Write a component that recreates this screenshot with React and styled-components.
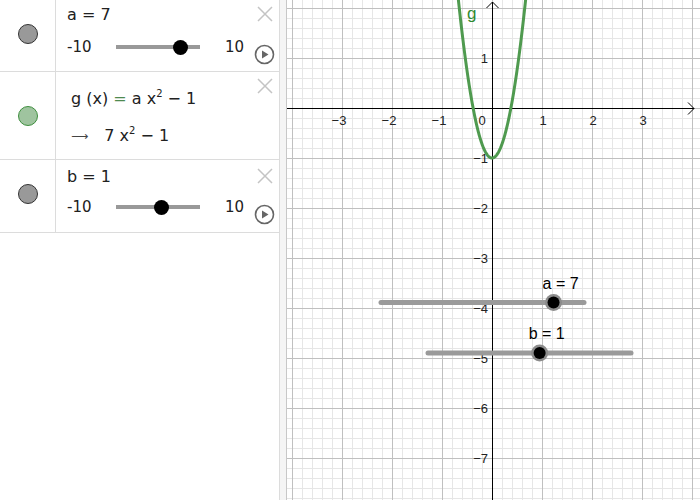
import * as React from 'react';
import styled, { createGlobalStyle } from 'styled-components';

const Global = createGlobalStyle`
  html, body { margin:0; padding:0; background:#fff; }
  body { font-family:'DejaVu Sans', sans-serif; color:#212121; }
`

const Page = styled.div`
  display:flex;
  width:700px;
  height:500px;
  overflow:hidden;
`

const AlgebraPanel = styled.div`
  display:flex;
  flex-direction:column;
  width:279px;
  height:100%;
  border-right:1px solid #dcdcdc;
  flex-shrink:0;
`

const Splitter = styled.div`
  width:6px;
  height:100%;
  background:#f5f5f5;
  border-right:1px solid #c8c8c8;
  flex-shrink:0;
`

const Graphics = styled.div`
  flex:1;
  height:100%;
  position:relative;
`

const Row = styled.div`
  display:flex;
  height:${p => p.h}px;
  border-bottom:1px solid #dcdcdc;
  box-sizing:border-box;
`

const MarbleCell = styled.div`
  display:flex;
  align-items:center;
  justify-content:center;
  width:56px;
  border-right:1px solid #dcdcdc;
  flex-shrink:0;
  padding-bottom:${p => p.shift || 0}px;
  box-sizing:border-box;
`

const Marble = styled.div`
  width:18px;
  height:18px;
  border-radius:50%;
  background:${p => p.fill};
  border:1px solid ${p => p.stroke};
`

const Content = styled.div`
  flex:1;
  position:relative;
  padding:${p => p.top || 8}px 0 0 ${p => p.left || 11}px;
`

const Label = styled.div`
  font-size:16px;
  line-height:16px;
  height:16px;
`

const SliderLine = styled.div`
  display:flex;
  align-items:center;
  margin-top:${p => p.gap || 14}px;
  font-size:15px;
  height:16px;
`

const Bound = styled.span`
  width:${p => p.w}px;
  flex-shrink:0;
`

const Track = styled.div`
  position:relative;
  width:84px;
  height:4px;
  background:#999;
  margin:0 25px 0 0;
`

const Knob = styled.div`
  position:absolute;
  top:50%;
  width:15px;
  height:15px;
  margin:-7.5px 0 0 -7.5px;
  border-radius:50%;
  background:#000;
`

const Close = styled.svg`
  position:absolute;
  top:${p => p.t}px;
  right:6px;
`

const Play = styled.svg`
  position:absolute;
  right:4px;
  top:${p => p.t}px;
`

const Formula = styled.div`
  font-size:16px;
  line-height:20px;
  sup { font-size:10px; vertical-align:7px; line-height:0; }
`

const Eq = styled.span`
  color:#4f8a4f;
`

const Output = styled.div`
  display:flex;
  align-items:center;
  gap:16px;
  margin-top:17px;
  font-size:16px;
  line-height:20px;
  sup { font-size:10px; vertical-align:7px; line-height:0; }
`

const Arrow = styled.span`
  color:#444;
  font-size:12px;
`

const GraphSvg = styled.svg`
  display:block;
  font-family:'Liberation Sans', Arial, sans-serif;
`

const CloseIcon = ({ t }) => (
  <Close t={t} width="16" height="16" viewBox="0 0 16 16">
    <path d="M1 1 L15 15 M15 1 L1 15" stroke="#c4c4c4" strokeWidth="1.5" fill="none" />
  </Close>
)

const PlayIcon = ({ t }) => (
  <Play t={t} width="21" height="21" viewBox="0 0 21 21">
    <circle cx="10.5" cy="10.5" r="9" stroke="#666" strokeWidth="1.6" fill="none" />
    <path d="M8 6.5 L14.5 10.5 L8 14.5 Z" fill="#666" />
  </Play>
)

// knob travels over the inner part of the track, as in the original
const knobPos = v => 0.107 + ((v + 10) / 20) * 0.78

const SliderRow = ({ name, value, h, closeTop, playTop, top, gap }) => (
  <Row h={h}>
    <MarbleCell shift={4}>
      <Marble fill="#999" stroke="#333" />
    </MarbleCell>
    <Content top={top}>
      <Label>{name} = {value}</Label>
      <SliderLine gap={gap}>
        <Bound w={49}>-10</Bound>
        <Track>
          <Knob style={{ left: `${knobPos(value) * 100}%` }} />
        </Track>
        <span>10</span>
      </SliderLine>
      <CloseIcon t={closeTop} />
      <PlayIcon t={playTop} />
    </Content>
  </Row>
)

const W = 413
const H = 500
const OX = 205
const OY = 108
const U = 50

const px = x => OX + x * U
const py = y => OY - y * U

const curve = () => {
  const pts = []
  for (let i = 0; i <= 160; i++) {
    const x = -0.69 + (1.38 * i) / 160
    pts.push(`${px(x).toFixed(2)},${py(7 * x * x - 1).toFixed(2)}`)
  }
  return 'M' + pts.join(' L')
}

const Grid = () => {
  const minor = []
  const major = []
  for (let x = OX % 10; x <= W; x += 10) {
    const isMajor = Math.round(x - OX) % 50 === 0
    const l = <line key={'v' + x} x1={x + 0.5} y1={0} x2={x + 0.5} y2={H} stroke={isMajor ? '#c0c0c0' : '#e6e6e6'} strokeWidth="1" />
    ;(isMajor ? major : minor).push(l)
  }
  for (let y = OY % 10; y <= H; y += 10) {
    const isMajor = Math.round(y - OY) % 50 === 0
    const l = <line key={'h' + y} x1={0} y1={y + 0.5} x2={W} y2={y + 0.5} stroke={isMajor ? '#c0c0c0' : '#e6e6e6'} strokeWidth="1" />
    ;(isMajor ? major : minor).push(l)
  }
  return <g>{minor}{major}</g>
}

const GraphSlider = ({ x1, x2, y, value, name }) => {
  const kx = x1 + ((value + 10) / 20) * (x2 - x1)
  return (
    <g>
      <line x1={x1} y1={y} x2={x2} y2={y} stroke="#9a9a9a" strokeWidth="5" strokeLinecap="round" />
      <circle cx={kx} cy={y} r="8.5" fill="#8c8c8c" />
      <circle cx={kx} cy={y} r="6" fill="#000" />
      <text x={kx - 11} y={y - 14} fontSize="16" fill="#000">{name} = {value}</text>
    </g>
  )
}

const Plane = () => (
  <GraphSvg width={W} height={H} viewBox={`0 0 ${W} ${H}`}>
    <Grid />
    <line x1={0} y1={OY + 0.5} x2={W - 6} y2={OY + 0.5} stroke="#000" strokeWidth="1" />
    <path d={`M${W - 12} ${OY - 5.5} L${W - 6} ${OY + 0.5} L${W - 12} ${OY + 6.5}`} stroke="#000" fill="none" strokeWidth="1" />
    <line x1={OX + 0.5} y1={2} x2={OX + 0.5} y2={H} stroke="#000" strokeWidth="1" />
    <path d={`M${OX - 5.5} 8 L${OX + 0.5} 2 L${OX + 6.5} 8`} stroke="#000" fill="none" strokeWidth="1" />
    {[-3, -2, -1, 1, 2, 3].map(n => (
      <text key={'x' + n} x={px(n) + (n < 0 ? -3 : 1)} y={OY + 17} fontSize="13" fill="#222" textAnchor="middle">
        {n < 0 ? '\u2212' + -n : n}
      </text>
    ))}
    <text x={OX - 10} y={OY + 17} fontSize="13" fill="#222" textAnchor="middle">0</text>
    {[1, -1, -2, -3, -4, -5, -6, -7].map(n => (
      <text key={'y' + n} x={OX - 4} y={py(n) + 5} fontSize="13" fill="#222" textAnchor="end">
        {n < 0 ? '\u2212' + -n : n}
      </text>
    ))}
    <path d={curve()} stroke="#4f9a4f" strokeWidth="3" fill="none" strokeLinejoin="round" />
    <text x={OX - 25} y={19} fontSize="17" fill="#2f8a2f">g</text>
    <GraphSlider x1={94} x2={297} y={302.5} value={7} name="a" />
    <GraphSlider x1={141} x2={344} y={353} value={1} name="b" />
  </GraphSvg>
)

export default function App() {
  return (
    <Page>
      <Global />
      <AlgebraPanel>
        <SliderRow name="a" value={7} h={72} closeTop={6} playTop={44} top={7} gap={16} />
        <Row h={88}>
          <MarbleCell>
            <Marble fill="#9fc49f" stroke="#3f8f3f" />
          </MarbleCell>
          <Content top={17} left={15}>
            <Formula>
              g (x) <Eq>=</Eq> a x<sup>2</sup> − 1
            </Formula>
            <Output>
              <Arrow>⟶</Arrow>
              <span>7 x<sup>2</sup> − 1</span>
            </Output>
            <CloseIcon t={6} />
          </Content>
        </Row>
        <SliderRow name="b" value={1} h={73} closeTop={8} playTop={44} top={9} gap={14} />
      </AlgebraPanel>
      <Splitter />
      <Graphics>
        <Plane />
      </Graphics>
    </Page>
  )
}
